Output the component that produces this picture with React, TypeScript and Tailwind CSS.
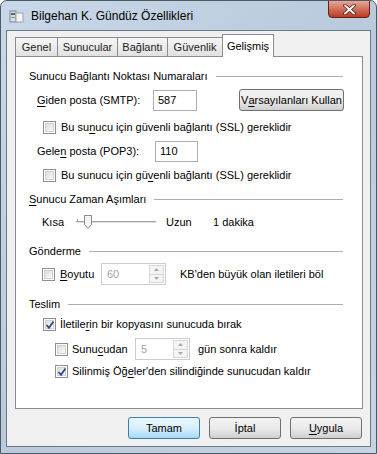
import React from "react";

const font = { fontFamily: '"Liberation Sans", Arial, sans-serif' };

function CheckBox({ checked }: { checked?: boolean }) {
  return (
    <span className="relative inline-flex h-[13px] w-[13px] shrink-0 items-center justify-center border border-[#8f8f8f] bg-white">
      <span className="h-[9px] w-[9px] border border-[#d0d0d0] bg-gradient-to-br from-[#dcdcdc] to-[#fbfbfb]" />
      {checked && (
        <svg className="absolute left-[1px] top-[1px]" width="10" height="10" viewBox="0 0 10 10">
          <path d="M1.5 5 L4 7.8 L8.5 1.5" fill="none" stroke="#2c4a8a" strokeWidth="1.8" />
        </svg>
      )}
    </span>
  );
}

function Heading({ text, u }: { text: string; u?: boolean }) {
  return (
    <div className="flex h-[20px] items-center pr-[19px]">
      <span className="text-black">
        {u ? (
          <>
            <span className="underline underline-offset-2">{text[0]}</span>
            {text.slice(1)}
          </>
        ) : (
          text
        )}
      </span>
      <span className="ml-[8px] h-px flex-1 bg-[#a8aeb4]" />
    </div>
  );
}

function SpinBox({ value, width }: { value: string; width: string }) {
  return (
    <div className={`flex h-[22px] ${width} items-center border border-[#c9cdd3] bg-white`}>
      <span className="flex-1 pl-[5px] text-[#a3a3a3]">{value}</span>
      <div className="mr-[1px] flex h-[18px] w-[15px] flex-col border border-[#d7d7d7] bg-[#f4f4f4]">
        <span className="flex flex-1 items-center justify-center border-b border-[#d7d7d7]">
          <svg width="5" height="3" viewBox="0 0 5 3"><path d="M0 3 L2.5 0 L5 3Z" fill="#a8a8a8" /></svg>
        </span>
        <span className="flex flex-1 items-center justify-center">
          <svg width="5" height="3" viewBox="0 0 5 3"><path d="M0 0 L2.5 3 L5 0Z" fill="#a8a8a8" /></svg>
        </span>
      </div>
    </div>
  );
}

function Btn({ children, def, className = "" }: { children: React.ReactNode; def?: boolean; className?: string }) {
  return (
    <div
      className={`flex items-center justify-center rounded-[3px] border ${
        def
          ? "border-[#3c7fb1] bg-gradient-to-b from-[#eaf6fd] via-[#d9f0fc] to-[#a7d9f5]"
          : "border-[#707070] bg-gradient-to-b from-[#f2f2f2] via-[#ebebeb] to-[#cfcfcf]"
      } ${className}`}
    >
      {children}
    </div>
  );
}

export default function App() {
  const tabs = [
    ["Genel", "w-[43px]"],
    ["Sunucular", "w-[61px]"],
    ["Bağlantı", "w-[51px]"],
    ["Güvenlik", "w-[56px]"],
  ];
  return (
    <div className="h-[454px] w-[377px] overflow-hidden text-[11px] text-black" style={font}>
      <div className="relative flex h-full w-full flex-col overflow-hidden rounded-t-[7px] border border-[#4d5a66] bg-gradient-to-br from-[#c9d8e8] via-[#b8cadc] to-[#c6d5e4]">
        {/* title bar */}
        <div className="flex h-[29px] items-center pl-[8px]">
          <svg width="16" height="16" viewBox="0 0 16 16">
            <rect x="1" y="3" width="6" height="11" fill="#d8dde3" stroke="#7c8590" />
            <rect x="7" y="5" width="7" height="9" fill="#f4f4f4" stroke="#9aa2ab" />
            <rect x="2" y="5" width="4" height="2" fill="#5a6672" />
            <rect x="2" y="9" width="4" height="1" fill="#8a939c" />
          </svg>
          <span className="ml-[6px] text-[12px] text-black">Bilgehan K. Gündüz Özellikleri</span>
        </div>
        <div className="absolute right-[6px] top-[-1px] flex h-[18px] w-[42px] items-center justify-center rounded-b-[4px] border border-[#6b2016] bg-gradient-to-b from-[#e8a797] via-[#d0705c] to-[#b93a22]">
          <svg width="13" height="11" viewBox="0 0 13 11">
            <path d="M2 1.5 L11 9.5 M11 1.5 L2 9.5" stroke="#4a1a10" strokeWidth="3.4" strokeLinecap="round" />
            <path d="M2 1.5 L11 9.5 M11 1.5 L2 9.5" stroke="#ffffff" strokeWidth="2" strokeLinecap="round" />
          </svg>
        </div>

        {/* client area */}
        <div className="mx-[5px] mb-[6px] flex flex-1 flex-col border border-[#6c7884] bg-[#f0f0f0] px-[8px] pt-[3px]">
          {/* tabs */}
          <div className="flex h-[22px] items-end">
            {tabs.map(([t, w]) => (
              <div
                key={t}
                className={`-mr-px flex h-[19px] ${w} items-center justify-center border border-b-0 border-[#898c95] bg-gradient-to-b from-[#f6f6f6] to-[#e1e1e1] text-[#1e1e1e]`}
              >
                {t}
              </div>
            ))}
            <div className="relative z-10 -mb-px flex h-[23px] w-[52px] items-start justify-center border border-b-0 border-[#898c95] bg-white pt-[3px]">
              Gelişmiş
            </div>
          </div>
          {/* panel */}
          <div className="flex h-[353px] w-[348px] flex-col border border-[#898c95] bg-white pl-[13px] pt-[9px]">
            <Heading text="Sunucu Bağlantı Noktası Numaraları" />
            <div className="mt-[2px] flex h-[24px] items-center pl-[8px]">
              <span className="w-[116px]">
                <span className="underline underline-offset-2">G</span>iden posta (SMTP):
              </span>
              <div className="flex h-[21px] w-[44px] items-center border border-[#abadb3] bg-white pl-[4px]">587</div>
              <Btn className="ml-[42px] h-[22px] w-[105px]">
                V<span className="underline underline-offset-2">a</span>rsayılanları Kullan
              </Btn>
            </div>
            <div className="mt-[5px] flex h-[20px] items-center gap-[5px] pl-[14px]">
              <CheckBox />
              <span>
                Bu su<span className="underline underline-offset-2">n</span>ucu için güvenli bağlantı (SSL) gereklidir
              </span>
            </div>
            <div className="mt-[2px] flex h-[24px] items-center pl-[8px]">
              <span className="w-[118px]">
                Gele<span className="underline underline-offset-2">n</span> posta (POP3):
              </span>
              <div className="flex h-[21px] w-[43px] items-center border border-[#abadb3] bg-white pl-[4px]">110</div>
            </div>
            <div className="mt-[2px] flex h-[20px] items-center gap-[5px] pl-[14px]">
              <CheckBox />
              <span>
                Bu sunucu için gü<span className="underline underline-offset-2">v</span>enli bağlantı (SSL) gereklidir
              </span>
            </div>
            <div className="mt-[4px]">
              <Heading text="Sunucu Zaman Aşımları" u />
            </div>
            <div className="mt-[3px] flex h-[20px] items-center pl-[13px]">
              <span className="w-[34px]">Kısa</span>
              <svg width="82" height="16" viewBox="0 0 82 16">
                <rect x="0" y="7" width="80" height="2" fill="#e0e0e0" />
                <rect x="0" y="7" width="80" height="1" fill="#a5a5a5" />
                <rect x="1" y="5" width="1" height="3" fill="#a5a5a5" />
                <path d="M8.5 1.5 H15.5 V10.5 L12 14.5 L8.5 10.5 Z" fill="#f2f2f2" stroke="#8a8a8a" />
              </svg>
              <span className="ml-[8px] w-[47px]">Uzun</span>
              <span>1 dakika</span>
            </div>
            <div className="mt-[9px]">
              <Heading text="Gönderme" />
            </div>
            <div className="mt-[1px] flex h-[24px] items-center pl-[13px]">
              <CheckBox />
              <span className="ml-[5px] w-[41px]">
                <span className="underline underline-offset-2">B</span>oyutu
              </span>
              <SpinBox value="60" width="w-[65px]" />
              <span className="ml-[14px]">KB'den büyük olan iletileri böl</span>
            </div>
            <div className="mt-[8px]">
              <Heading text="Teslim" />
            </div>
            <div className="flex h-[20px] items-center gap-[4px] pl-[14px]">
              <CheckBox checked />
              <span>
                İletile<span className="underline underline-offset-2">r</span>in bir kopyasını sunucuda bırak
              </span>
            </div>
            <div className="mt-[3px] flex h-[24px] items-center pl-[26px]">
              <CheckBox />
              <span className="ml-[4px] w-[63px]">
                Sunu<span className="underline underline-offset-2">c</span>udan
              </span>
              <SpinBox value="5" width="w-[55px]" />
              <span className="ml-[8px]">gün sonra kaldır</span>
            </div>
            <div className="flex h-[20px] items-center gap-[4px] pl-[26px]">
              <CheckBox checked />
              <span>
                Silinmiş Öğ<span className="underline underline-offset-2">e</span>ler'den silindiğinde sunucudan kaldır
              </span>
            </div>
          </div>
          {/* buttons */}
          <div className="mt-[8px] flex gap-[9px] pl-[113px]">
            <Btn def className="h-[22px] w-[72px]">Tamam</Btn>
            <Btn className="h-[22px] w-[72px]">İptal</Btn>
            <Btn className="h-[22px] w-[72px]">
              <span className="underline underline-offset-2">U</span>ygula
            </Btn>
          </div>
        </div>
      </div>
    </div>
  );
}
